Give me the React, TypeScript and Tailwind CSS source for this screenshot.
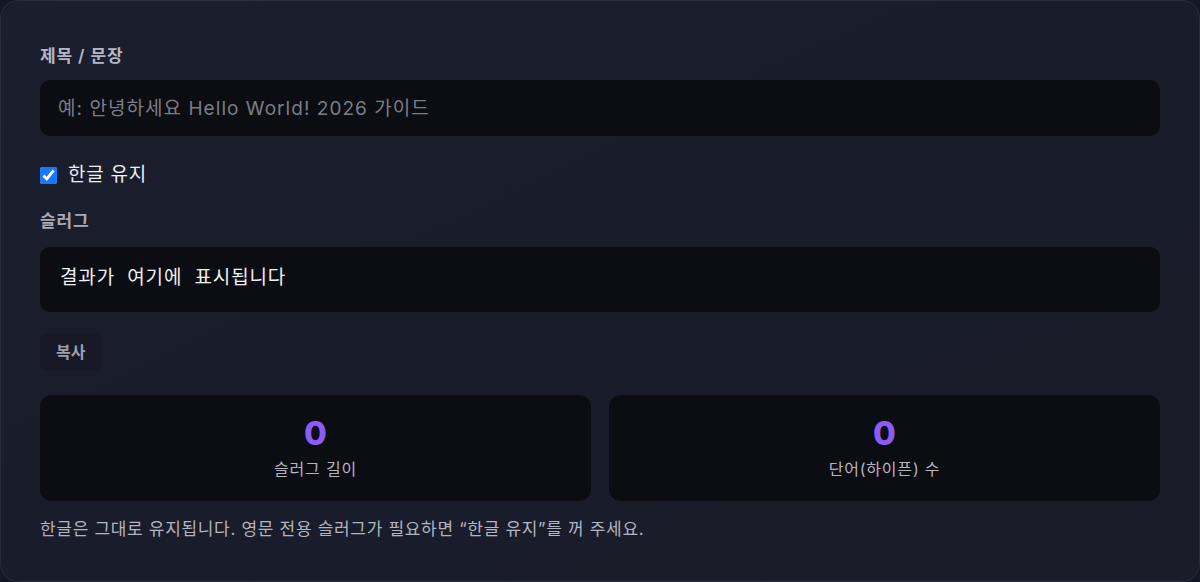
import { useState } from 'react';

// ---------------------------------------------------------------------------
// Slug converter card
// ---------------------------------------------------------------------------

const FONT = 'font-[Inter,"Noto_Sans_CJK_KR",sans-serif]';

function StatCard({ value, label }: { value: number; label: string }) {
  return (
    <div className="flex h-[106px] flex-col items-center justify-center rounded-xl bg-[#0c0d12]">
      <span className="font-[Inter,sans-serif] text-[33px] font-extrabold leading-9 text-[#8b5cf6]">
        {value}
      </span>
      <span className="mt-[6px] text-base leading-6 tracking-[0.05em] text-[#b3b5c0]">{label}</span>
    </div>
  );
}

export default function App() {
  const [title, setTitle] = useState('');
  const [keepKorean, setKeepKorean] = useState(true);

  const slug = title.trim();

  return (
    <div className={`min-h-[582px] bg-[#131726] ${FONT}`}>
      <div className="h-[582px] rounded-[18px] border border-[#2a2d3f] bg-gradient-to-br from-[#1b1e2d] via-[#191c2a] to-[#1b1c2a] px-[39px] pt-[43px]">
        <label className="block text-[17px] font-semibold leading-6 tracking-[0.05em] text-[#b5b7c4]">
          제목 / 문장
        </label>
        <input
          value={title}
          onChange={e => setTitle(e.target.value)}
          placeholder="예: 안녕하세요 Hello World! 2026 가이드"
          className="mt-3 h-[56px] w-full rounded-[10px] bg-[#0c0d12] px-[18px] text-[19px] tracking-[0.055em] text-[#e5e7eb] outline-none placeholder:text-[#7b7d86]"
        />

        <label className="mt-[27px] flex items-center gap-[11px]">
          <input
            type="checkbox"
            checked={keepKorean}
            onChange={e => setKeepKorean(e.target.checked)}
            className="m-0 h-[17px] w-[17px] accent-[#1677ff]"
          />
          <span className="text-[19px] leading-6 tracking-[0.04em] text-[#eceef3]">한글 유지</span>
        </label>

        <p className="mt-[22px] text-[17px] font-semibold leading-6 tracking-[0.05em] text-[#a9abb8]">슬러그</p>
        <div className="mt-[14px] flex h-[65px] items-center rounded-[10px] bg-[#0c0d12] px-5">
          <span className="font-['Liberation_Mono','Noto_Sans_CJK_KR',monospace] text-[19px] tracking-[0.045em] text-[#eef0f5]">
            {slug || '결과가 여기에 표시됩니다'}
          </span>
        </div>

        <button className="mt-[21px] h-[38px] rounded-lg bg-[#171926] px-4 text-base font-semibold text-[#9c9eab]">
          복사
        </button>

        <div className="mt-6 grid grid-cols-2 gap-[18px]">
          <StatCard value={0} label="슬러그 길이" />
          <StatCard value={0} label="단어(하이픈) 수" />
        </div>

        <p className="mt-4 text-[17px] leading-6 tracking-[0.04em] text-[#b2b4c0]">
          한글은 그대로 유지됩니다. 영문 전용 슬러그가 필요하면 “한글 유지”를 꺼 주세요.
        </p>
      </div>
    </div>
  );
}
